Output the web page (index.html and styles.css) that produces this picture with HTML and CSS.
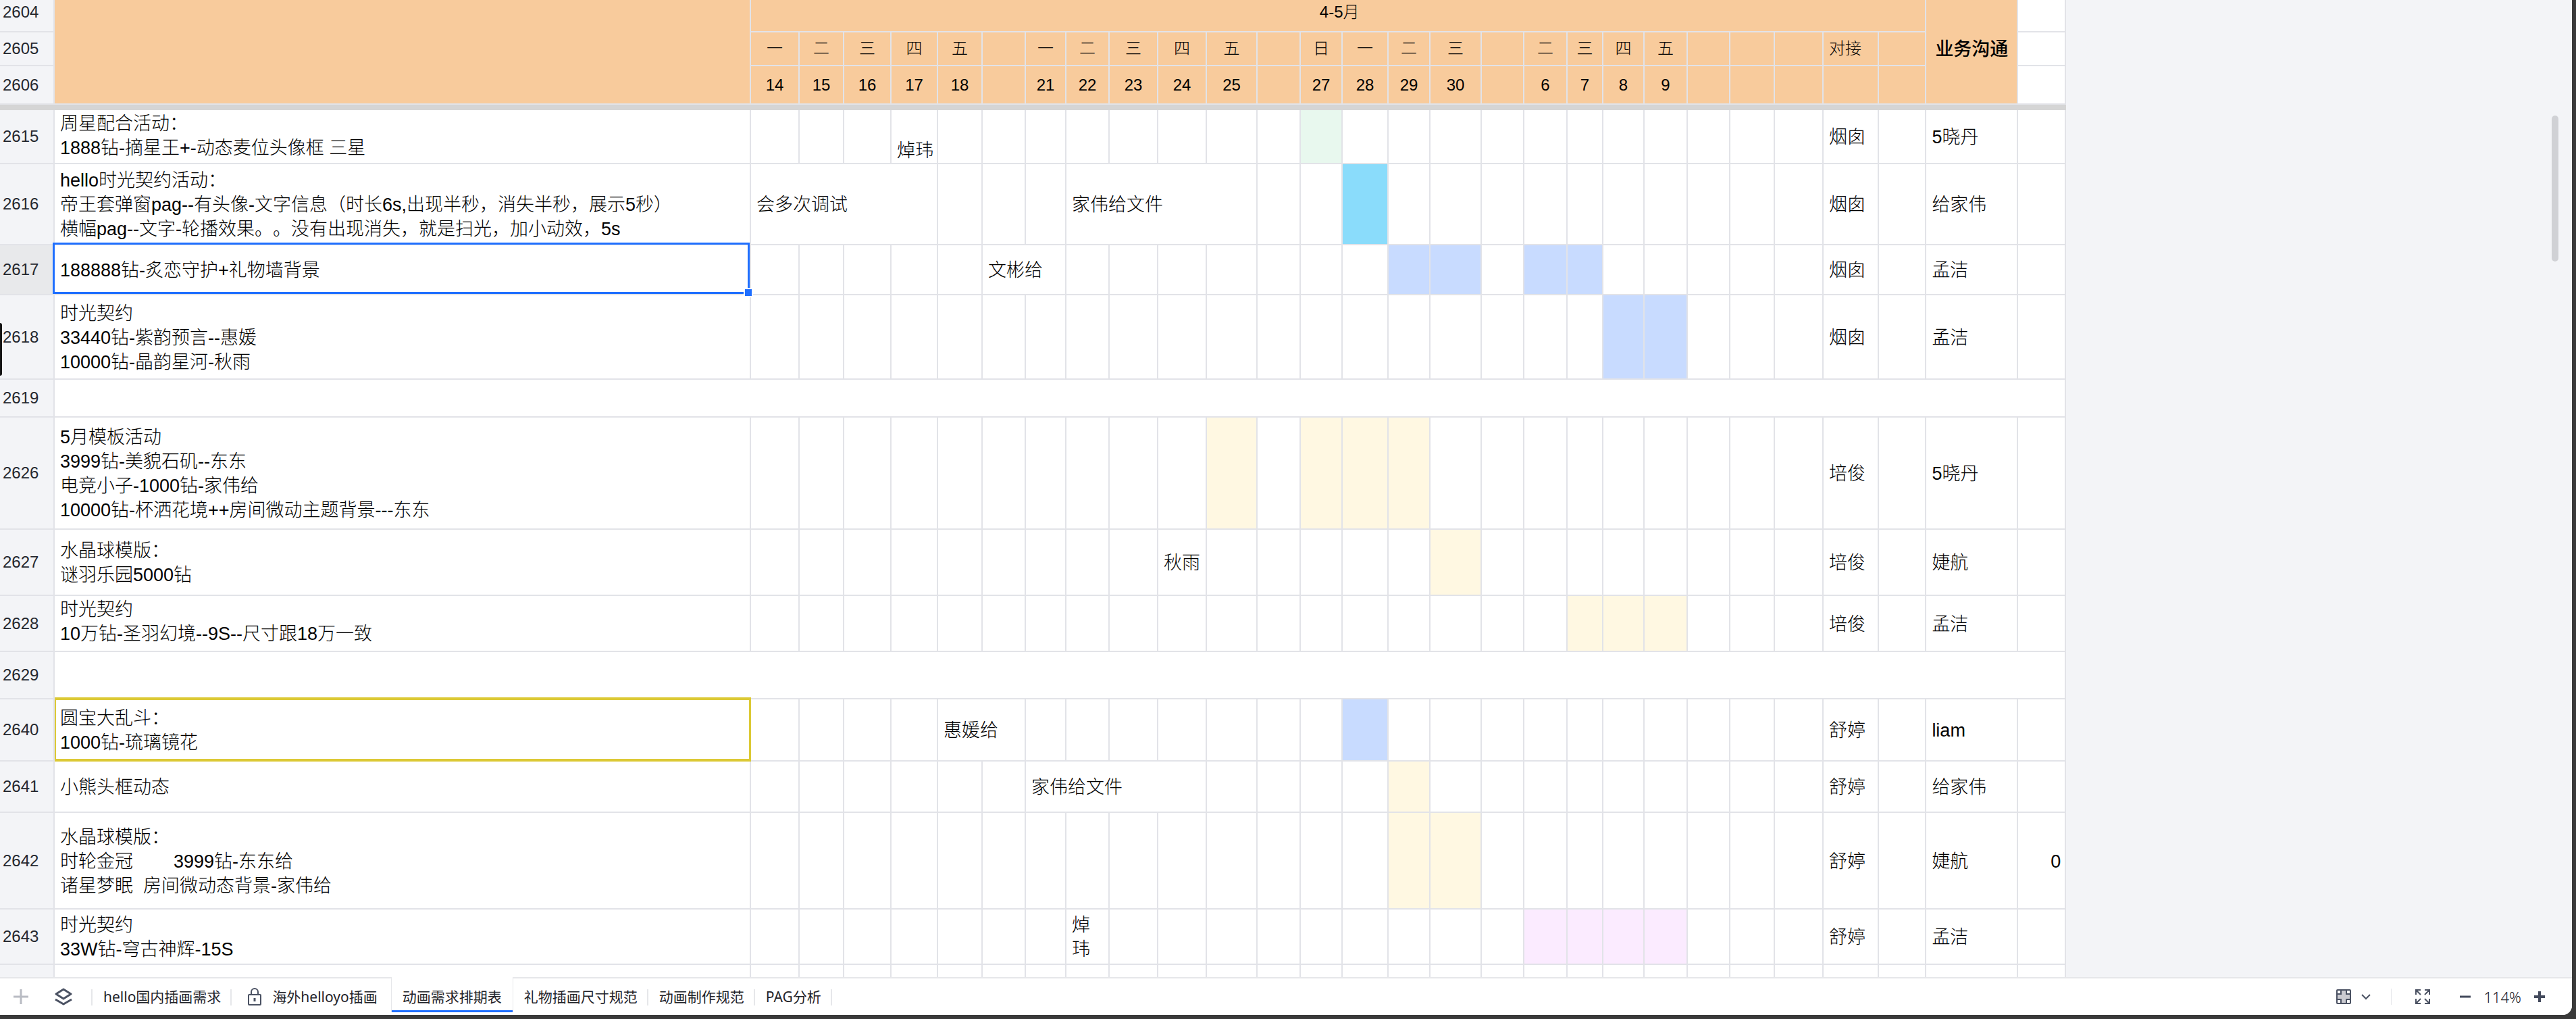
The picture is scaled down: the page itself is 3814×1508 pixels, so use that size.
FILE: index.html
```html
<!DOCTYPE html>
<html lang="zh-CN">
<head>
<meta charset="utf-8">
<title>动画需求排期表</title>
<link rel="stylesheet" href="styles.css">
</head>
<body>
<div class="app">
<main class="sheet">
<table class="grid">
<colgroup>
<col class="w-head"><col class="w-task">
<col class="w72"><col class="w66"><col class="w70"><col class="w69"><col class="w66"><col class="w64">
<col class="w60"><col class="w64"><col class="w72"><col class="w72"><col class="w75"><col class="w64">
<col class="w62"><col class="w68"><col class="w62"><col class="w76"><col class="w63">
<col class="w64"><col class="w53"><col class="w61"><col class="w64"><col class="w63"><col class="w66"><col class="w72">
<col class="w82"><col class="w70"><col class="w136"><col class="w71">
</colgroup>
<thead>
<tr class="h48"><th scope="row">2604</th><td class="peach" rowspan="3"></td><td class="peach month" colspan="26">4-5月</td><td class="peach owner" rowspan="3">业务沟通</td><td></td></tr>
<tr class="h50 peach-row"><th scope="row">2605</th><td>一</td><td>二</td><td>三</td><td>四</td><td>五</td><td></td><td>一</td><td>二</td><td>三</td><td>四</td><td>五</td><td></td><td>日</td><td>一</td><td>二</td><td>三</td><td></td><td>二</td><td>三</td><td>四</td><td>五</td><td></td><td></td><td></td><td class="left">对接</td><td></td><td class="plain"></td></tr>
<tr class="h57 peach-row"><th scope="row">2606</th><td>14</td><td>15</td><td>16</td><td>17</td><td>18</td><td></td><td>21</td><td>22</td><td>23</td><td>24</td><td>25</td><td></td><td>27</td><td>28</td><td>29</td><td>30</td><td></td><td>6</td><td>7</td><td>8</td><td>9</td><td></td><td></td><td></td><td></td><td></td><td class="plain"></td></tr>
<tr class="freeze"><td colspan="30"></td></tr>
</thead>
<tbody>
<tr class="h80"><th scope="row">2615</th><td class="top">周星配合活动：<br>1888钻-摘星王+-动态麦位头像框 三星</td><td></td><td></td><td></td><td class="bottom">焯玮</td><td></td><td></td><td></td><td></td><td></td><td></td><td></td><td></td><td class="green"></td><td></td><td></td><td></td><td></td><td></td><td></td><td></td><td></td><td></td><td></td><td></td><td>烟囱</td><td></td><td>5晓丹</td><td></td></tr>
<tr class="h120"><th scope="row">2616</th><td>hello时光契约活动：<br>帝王套弹窗pag--有头像-文字信息（时长6s,出现半秒，消失半秒，展示5秒）<br>横幅pag--文字-轮播效果。。没有出现消失，就是扫光，加小动效，5s</td><td colspan="4">会多次调试</td><td></td><td></td><td></td><td colspan="4">家伟给文件</td><td></td><td></td><td class="cyan"></td><td></td><td></td><td></td><td></td><td></td><td></td><td></td><td></td><td></td><td></td><td>烟囱</td><td></td><td>给家伟</td><td></td></tr>
<tr class="h74"><th scope="row" class="current">2617</th><td class="selected">188888钻-炙恋守护+礼物墙背景<span class="selection"><span class="handle"></span></span></td><td></td><td></td><td></td><td></td><td></td><td colspan="2">文彬给</td><td></td><td></td><td></td><td></td><td></td><td></td><td></td><td class="blue"></td><td class="blue"></td><td></td><td class="blue"></td><td class="blue"></td><td></td><td></td><td></td><td></td><td></td><td>烟囱</td><td></td><td>孟洁</td><td></td></tr>
<tr class="h125"><th scope="row">2618</th><td>时光契约<br>33440钻-紫韵预言--惠媛<br>10000钻-晶韵星河-秋雨</td><td></td><td></td><td></td><td></td><td></td><td></td><td></td><td></td><td></td><td></td><td></td><td></td><td></td><td></td><td></td><td></td><td></td><td></td><td></td><td class="blue"></td><td class="blue"></td><td></td><td></td><td></td><td>烟囱</td><td></td><td>孟洁</td><td></td></tr>
<tr class="h56"><th scope="row">2619</th><td colspan="29"></td></tr>
<tr class="h166"><th scope="row">2626</th><td>5月模板活动<br>3999钻-美貌石矶--东东<br>电竞小子-1000钻-家伟给<br>10000钻-杯洒花境++房间微动主题背景---东东</td><td></td><td></td><td></td><td></td><td></td><td></td><td></td><td></td><td></td><td></td><td class="cream"></td><td></td><td class="cream"></td><td class="cream"></td><td class="cream"></td><td></td><td></td><td></td><td></td><td></td><td></td><td></td><td></td><td></td><td>培俊</td><td></td><td>5晓丹</td><td></td></tr>
<tr class="h98"><th scope="row">2627</th><td>水晶球模版：<br>谜羽乐园5000钻</td><td></td><td></td><td></td><td></td><td></td><td></td><td></td><td></td><td></td><td>秋雨</td><td></td><td></td><td></td><td></td><td></td><td class="cream"></td><td></td><td></td><td></td><td></td><td></td><td></td><td></td><td></td><td>培俊</td><td></td><td>婕航</td><td></td></tr>
<tr class="h83"><th scope="row">2628</th><td class="top">时光契约<br>10万钻-圣羽幻境--9S--尺寸跟18万一致</td><td></td><td></td><td></td><td></td><td></td><td></td><td></td><td></td><td></td><td></td><td></td><td></td><td></td><td></td><td></td><td></td><td></td><td></td><td class="cream"></td><td class="cream"></td><td class="cream"></td><td></td><td></td><td></td><td>培俊</td><td></td><td>孟洁</td><td></td></tr>
<tr class="h70"><th scope="row">2629</th><td colspan="29"></td></tr>
<tr class="h92"><th scope="row">2640</th><td class="selected">圆宝大乱斗：<br>1000钻-琉璃镜花<span class="mark"></span></td><td></td><td></td><td></td><td></td><td colspan="2">惠媛给</td><td></td><td></td><td></td><td></td><td></td><td></td><td></td><td class="blue"></td><td></td><td></td><td></td><td></td><td></td><td></td><td></td><td></td><td></td><td></td><td>舒婷</td><td></td><td>liam</td><td></td></tr>
<tr class="h76"><th scope="row">2641</th><td>小熊头框动态</td><td></td><td></td><td></td><td></td><td></td><td></td><td colspan="4">家伟给文件</td><td></td><td></td><td></td><td></td><td class="cream"></td><td></td><td></td><td></td><td></td><td></td><td></td><td></td><td></td><td></td><td>舒婷</td><td></td><td>给家伟</td><td></td></tr>
<tr class="h143"><th scope="row">2642</th><td class="keep">水晶球模版：<br>时轮金冠        3999钻-东东给<br>诸星梦眠  房间微动态背景-家伟给</td><td></td><td></td><td></td><td></td><td></td><td></td><td></td><td></td><td></td><td></td><td></td><td></td><td></td><td></td><td class="cream"></td><td class="cream"></td><td></td><td></td><td></td><td></td><td></td><td></td><td></td><td></td><td>舒婷</td><td></td><td>婕航</td><td class="number">0</td></tr>
<tr class="h82"><th scope="row">2643</th><td>时光契约<br>33W钻-穹古神辉-15S</td><td></td><td></td><td></td><td></td><td></td><td></td><td></td><td>焯玮</td><td></td><td></td><td></td><td></td><td></td><td></td><td></td><td></td><td></td><td class="pink"></td><td class="pink"></td><td class="pink"></td><td class="pink"></td><td></td><td></td><td></td><td>舒婷</td><td></td><td>孟洁</td><td></td></tr>
<tr class="h82"><th scope="row"></th><td></td><td></td><td></td><td></td><td></td><td></td><td></td><td></td><td></td><td></td><td></td><td></td><td></td><td></td><td></td><td></td><td></td><td></td><td></td><td></td><td></td><td></td><td></td><td></td><td></td><td></td><td></td><td></td><td></td></tr>
</tbody>
</table>
<div class="drawer-handle"></div>
<div class="scrollbar"></div>
</main>
<footer class="footer">
<button class="icon-btn add" aria-label="新建工作表"><svg width="22" height="22" viewBox="0 0 22 22" fill="none" stroke="#b9bcc3" stroke-width="3"><path d="M11 0v22M0 11h22"/></svg></button>
<button class="icon-btn list" aria-label="工作表列表"><svg width="26" height="26" viewBox="0 0 26 26" fill="none" stroke="#4b5263" stroke-width="3" stroke-linejoin="round"><path d="M13 2l11 7-11 7-11-7z"/><path d="M1 17l12 7 12-7"/></svg></button>
<nav class="tabs">
<button class="tab">hello国内插画需求</button>
<button class="tab locked"><svg width="20" height="26" viewBox="0 0 20 26" fill="none" stroke="#4b5263" stroke-width="2"><rect x="1" y="10" width="18" height="15" rx="1"/><path d="M5 10V6a5 5 0 0 1 10 0v4"/><path d="M10 15v5" stroke-width="3"/></svg>海外helloyo插画</button>
<button class="tab active">动画需求排期表</button>
<button class="tab">礼物插画尺寸规范</button>
<button class="tab">动画制作规范</button>
<button class="tab">PAG分析</button>
</nav>
<div class="tools">
<button class="icon-btn freeze-btn" aria-label="阅读模式"><svg width="22" height="22" viewBox="0 0 22 22" fill="#fff" stroke="#4b5263" stroke-width="2"><rect x="1" y="1" width="20" height="20" rx="1" fill="#cbcbd1"/><path d="M1 7h6V1M15 1v6h6M21 15h-6v6M7 21v-6H1"/><path d="M2 2h4v4H2zM16 2h4v4h-4zM16 16h4v4h-4zM2 16h4v4H2z" stroke="none"/></svg><svg width="14" height="10" viewBox="0 0 14 10" fill="none" stroke="#4b5263" stroke-width="2"><path d="M1 2l6 6 6-6"/></svg></button>
<span class="divider"></span>
<button class="icon-btn full" aria-label="全屏"><svg width="22" height="22" viewBox="0 0 22 22" fill="none" stroke="#4b5263" stroke-width="2"><path d="M1 8V1h7M1 1l7 7M14 1h7v7M21 1l-7 7M21 14v7h-7M21 21l-7-7M8 21H1v-7M1 21l7-7"/></svg></button>
<button class="icon-btn" aria-label="缩小"><svg width="16" height="16" viewBox="0 0 16 16" stroke="#434a5c" stroke-width="3"><path d="M0 8h16"/></svg></button>
<span class="percent">114%</span>
<button class="icon-btn" aria-label="放大"><svg width="16" height="16" viewBox="0 0 16 16" stroke="#434a5c" stroke-width="4"><path d="M0 8h16M8 0v16"/></svg></button>
</div>
</footer>
</div>
</body>
</html>
```

FILE: styles.css
```css
* { box-sizing: border-box; }

body {
  margin: 0;
  background: #3a3a3a;
  color: #000;
  font-family: "Liberation Sans", "Noto Sans CJK SC", sans-serif;
  font-size: 27px;
  font-weight: 300;
  line-height: 36px;
  text-spacing-trim: space-all;
}

.app {
  display: flex;
  flex-direction: column;
  height: calc(100vh - 6px);
  margin-right: 6px;
  overflow: hidden;
  background: #f3f4f7;
  border-bottom-right-radius: 14px;
}

.sheet {
  position: relative;
  flex: 1;
  min-height: 0;
  overflow: hidden;
}

/* Grid */
.grid {
  width: 3059px;
  table-layout: fixed;
  border-spacing: 0;
}

.grid th,
.grid td {
  padding: 0 0 0 8px;
  border: solid #e2e3e8;
  border-width: 0 2px 2px 0;
  background: #fff;
  text-align: left;
  vertical-align: middle;
  font-weight: 300;
  word-break: break-all;
}

.grid td { padding-right: 4px; }
.grid tbody td { padding-top: 2px; }

.grid th {
  padding-left: 4px;
  background: #f3f4f7;
  color: #24272e;
  font-size: 24px;
}

.grid th.current { background: #e8e9eb; }

.w-head { width: 81px; }
.w-task { width: 1031px; }
.w53 { width: 53px; }
.w60 { width: 60px; }
.w61 { width: 61px; }
.w62 { width: 62px; }
.w63 { width: 63px; }
.w64 { width: 64px; }
.w66 { width: 66px; }
.w68 { width: 68px; }
.w69 { width: 69px; }
.w70 { width: 70px; }
.w71 { width: 71px; }
.w72 { width: 72px; }
.w75 { width: 75px; }
.w76 { width: 76px; }
.w82 { width: 82px; }
.w136 { width: 136px; }

.h48 { height: 48px; }
.h50 { height: 50px; }
.h56 { height: 56px; }
.h57 { height: 57px; }
.h70 { height: 70px; }
.h74 { height: 74px; }
.h76 { height: 76px; }
.h80 { height: 80px; }
.h82 { height: 82px; }
.h83 { height: 83px; }
.h92 { height: 92px; }
.h98 { height: 98px; }
.h120 { height: 120px; }
.h125 { height: 125px; }
.h143 { height: 143px; }
.h166 { height: 166px; }

.grid .peach,
.grid .peach-row td { background: #f8cb9c; }

.grid .peach-row td {
  padding: 0;
  font-size: 24px;
  text-align: center;
}

.grid .peach-row .left {
  padding-left: 8px;
  text-align: left;
}

.grid .peach-row .plain { background: #fff; }

.grid .h48 th,
.grid .month { padding-bottom: 10px; }

.grid .month {
  font-size: 24px;
  text-align: center;
}

.grid .owner {
  padding: 0 0 8px;
  font-weight: 500;
  text-align: center;
}

.grid .freeze td {
  height: 8px;
  padding: 0;
  border: 0;
  background: #d5d5d5;
}

.grid .top { vertical-align: top; }
.grid .bottom { vertical-align: bottom; }
.grid .keep { white-space: pre; }

.grid .number {
  padding-right: 6px;
  text-align: right;
}

.grid .green { background: #e8f8ee; }
.grid .cyan { background: #8adcfb; }
.grid .blue { background: #c8dbff; }
.grid .cream { background: #fff8e2; }
.grid .pink { background: #fbebff; }

.grid .selected { position: relative; }

.selection,
.mark {
  position: absolute;
  pointer-events: none;
}

.selection {
  inset: -4px 0 0 -3px;
  border: 3px solid #1f6fff;
}

.handle {
  position: absolute;
  right: -8px;
  bottom: -8px;
  width: 14px;
  height: 14px;
  border: 2px solid #fff;
  background: #1f6fff;
}

.mark {
  inset: -3px -2px -2px 0;
  border: solid #dcc935;
  border-width: 4px 3px 4px 2px;
}

.drawer-handle {
  position: absolute;
  top: 478px;
  left: 0;
  width: 3px;
  height: 78px;
  background: #151515;
  border-radius: 0 3px 3px 0;
}

.scrollbar {
  position: absolute;
  top: 171px;
  right: 20px;
  width: 10px;
  height: 216px;
  background: #d0d1d5;
  border-radius: 5px;
}

/* Footer */
.footer {
  display: flex;
  align-items: center;
  height: 56px;
  border-top: 2px solid #e6e7ea;
  background: #fff;
  color: #1f2329;
  font-family: "Noto Sans", "Noto Sans CJK SC", sans-serif;
  font-size: 21px;
  line-height: 28px;
}

button {
  padding: 0;
  border: 0;
  background: none;
  color: inherit;
  font: inherit;
}

.icon-btn {
  display: flex;
  align-items: center;
}

.add { margin: 0 39px 0 20px; }
.list { margin-right: 28px; }

.tabs {
  display: flex;
  align-self: flex-start;
  height: 52px;
  margin-top: -2px;
  padding-left: 2px;
  background: linear-gradient(#e6e7ea, #e6e7ea) 0 18px / 2px 24px no-repeat;
  font-weight: 400;
}

.tab {
  display: flex;
  align-items: center;
  padding: 6px 16px 0;
  background: linear-gradient(#e6e7ea, #e6e7ea) right 18px / 2px 24px no-repeat;
  white-space: nowrap;
}

.locked {
  padding: 6px 20px 0 24px;
  background: none;
}

.locked svg { margin-right: 16px; }

.active {
  border: solid #e6e7ea;
  border-width: 0 1px;
  background: linear-gradient(#1f6fff, #1f6fff) bottom / 100% 3px no-repeat #fff;
}

.tools {
  display: flex;
  align-items: center;
  margin-left: auto;
  margin-right: 40px;
}

.freeze-btn { gap: 15px; }

.divider {
  width: 1px;
  height: 24px;
  margin: 0 35px 0 30px;
  background: #e6e7ea;
}

.full { margin-right: 44px; }

.percent {
  margin: 0 19px;
  font-size: 22px;
}
```
